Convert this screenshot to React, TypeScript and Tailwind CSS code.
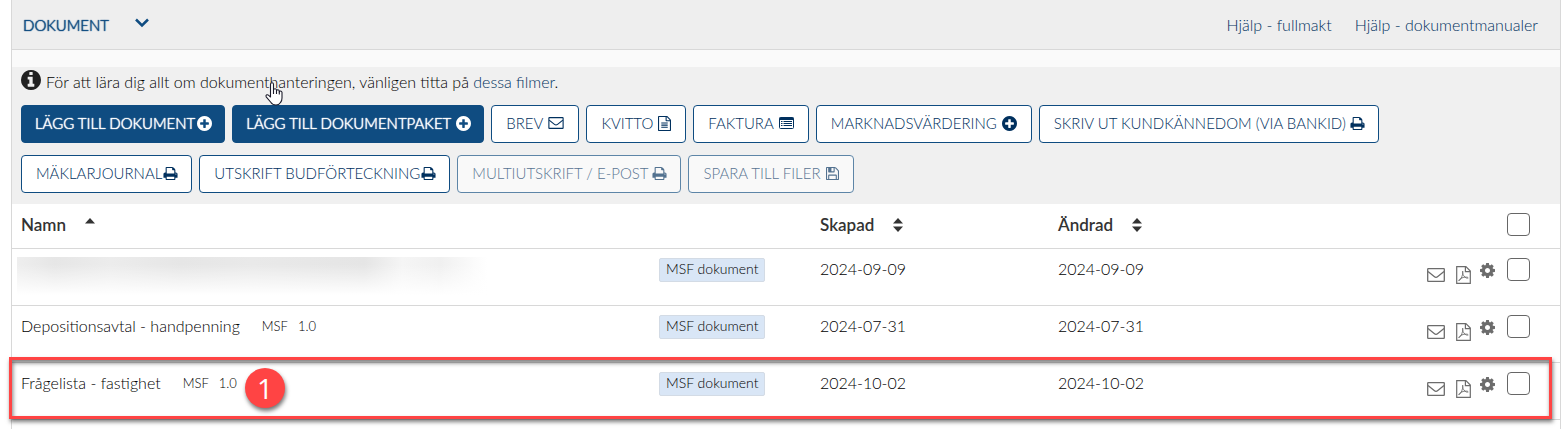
import React from 'react'
import clsx from 'clsx'

type IconProps = { className?: string }

const ICON_PATHS = {
  plus: 'M1344 960v-128q0-26-19-45t-45-19h-256v-256q0-26-19-45t-45-19h-128q-26 0-45 19t-19 45v256h-256q-26 0-45 19t-19 45v128q0 26 19 45t45 19h256v256q0 26 19 45t45 19h128q26 0 45-19t19-45v-256h256q26 0 45-19t19-45zm320-64q0 209-103 385.5t-279.5 279.5-385.5 103-385.5-103-279.5-279.5-103-385.5 103-385.5 279.5-279.5 385.5-103 385.5 103 279.5 279.5 103 385.5z',
  info: 'M1152 1376v-160q0-14-9-23t-23-9h-96v-512q0-14-9-23t-23-9h-320q-14 0-23 9t-9 23v160q0 14 9 23t23 9h96v320h-96q-14 0-23 9t-9 23v160q0 14 9 23t23 9h448q14 0 23-9t9-23zm-128-896v-160q0-14-9-23t-23-9h-192q-14 0-23 9t-9 23v160q0 14 9 23t23 9h192q14 0 23-9t9-23zm640 416q0 209-103 385.5t-279.5 279.5-385.5 103-385.5-103-279.5-279.5-103-385.5 103-385.5 279.5-279.5 385.5-103 385.5 103 279.5 279.5 103 385.5z',
  print: 'M448 1536h896v-256h-896v256zm0-640h896v-384h-160q-40 0-68-28t-28-68v-160h-640v640zm1152 64q0-26-19-45t-45-19-45 19-19 45 19 45 45 19 45-19 19-45zm128 0v416q0 13-9.5 22.5t-22.5 9.5h-224v160q0 40-28 68t-68 28h-960q-40 0-68-28t-28-68v-160h-224q-13 0-22.5-9.5t-9.5-22.5v-416q0-79 56.5-135.5t135.5-56.5h64v-544q0-40 28-68t68-28h672q40 0 88 20t76 48l152 152q28 28 48 76t20 88v256h64q79 0 135.5 56.5t56.5 135.5z',
  save: 'M512 1536h768v-384h-768v384zm896 0h128v-896q0-14-10-38.5t-20-34.5l-281-281q-10-10-34-20t-39-10v416q0 40-28 68t-68 28h-576q-40 0-68-28t-28-68v-416h-128v1280h128v-416q0-40 28-68t68-28h832q40 0 68 28t28 68v416zm-384-928v-320q0-13-9.5-22.5t-22.5-9.5h-192q-13 0-22.5 9.5t-9.5 22.5v320q0 13 9.5 22.5t22.5 9.5h192q13 0 22.5-9.5t9.5-22.5zm640 32v928q0 40-28 68t-68 28h-1344q-40 0-68-28t-28-68v-1344q0-40 28-68t68-28h928q40 0 88 20t76 48l280 280q28 28 48 76t20 88z',
  file: 'M1596 380q28 28 48 76t20 88v1152q0 40-28 68t-68 28h-1344q-40 0-68-28t-28-68v-1600q0-40 28-68t68-28h896q40 0 88 20t76 48zm-444-244v376h376q-10-29-22-41l-313-313q-12-12-41-22zm384 1528v-1024h-416q-40 0-68-28t-28-68v-416h-768v1536h1280zm-1024-864q0-14 9-23t23-9h704q14 0 23 9t9 23v64q0 14-9 23t-23 9h-704q-14 0-23-9t-9-23v-64zm736 224q14 0 23 9t9 23v64q0 14-9 23t-23 9h-704q-14 0-23-9t-9-23v-64q0-14 9-23t23-9h704zm0 256q14 0 23 9t9 23v64q0 14-9 23t-23 9h-704q-14 0-23-9t-9-23v-64q0-14 9-23t23-9h704z',
  cog: 'M1152 896q0-106-75-181t-181-75-181 75-75 181 75 181 181 75 181-75 75-181zm512-109v222q0 12-8 23t-20 13l-185 28q-19 54-39 91 35 50 107 138 10 12 10 25t-9 23q-27 37-99 108t-94 71q-12 0-26-9l-138-108q-44 23-91 38-16 136-29 186-7 28-36 28h-222q-14 0-24.5-8.5t-11.5-21.5l-28-184q-49-16-90-37l-141 107q-10 9-25 9-14 0-25-11-126-114-165-168-7-10-7-23 0-12 8-23 15-21 51-66.5t54-70.5q-27-50-41-99l-183-27q-13-2-21-12.5t-8-23.5v-222q0-12 8-23t19-13l186-28q14-46 39-92-40-57-107-138-10-12-10-24 0-10 9-23 26-36 98.5-107.5t94.5-71.5q13 0 26 10l138 107q44-23 91-38 16-136 29-186 7-28 36-28h222q14 0 24.5 8.5t11.5 21.5l28 184q49 16 90 37l142-107q9-9 24-9 13 0 25 10 129 119 165 170 7 8 7 22 0 12-8 23-15 21-51 66.5t-54 70.5q26 50 41 98l183 28q13 2 21 12.5t8 23.5z',
}

function SolidIcon({ name, className }: { name: keyof typeof ICON_PATHS; className?: string }) {
  return (
    <svg viewBox="128 128 1536 1536" className={clsx('shrink-0 overflow-visible', className)} fill="currentColor" aria-hidden="true">
      <path d={ICON_PATHS[name]} />
    </svg>
  )
}

const PlusIcon = () => <SolidIcon name="plus" className="size-[15px]" />
const PrintIcon = () => <SolidIcon name="print" className="size-[13px]" />
const SaveIcon = () => <SolidIcon name="save" className="size-[13px]" />
const FileIcon = () => <SolidIcon name="file" className="size-[13px]" />

function EnvelopeIcon({ className }: IconProps) {
  return (
    <svg viewBox="0 0 18 14" className={clsx('shrink-0', className)} fill="none" stroke="currentColor" strokeWidth="1.3" aria-hidden="true">
      <rect x="0.7" y="0.7" width="16.6" height="12.6" rx="0.6" />
      <path d="M1 3.6 7.2 8.6Q9 10 10.8 8.6L17 3.6" />
    </svg>
  )
}

function PdfIcon({ className }: IconProps) {
  return (
    <svg viewBox="0 0 15 18" className={clsx('shrink-0', className)} fill="none" stroke="currentColor" strokeWidth="1.2" aria-hidden="true">
      <path d="M0.7 0.7h9.2l4.4 4.4v12.2H0.7z" />
      <path d="M9.4 0.7v4.9h4.9" />
      <path strokeWidth="0.9" d="M6.7 5.2c-.7 1.700.5 4.300 2.200 5.900 1.100 1 2.600 1.300 3.300.8-.2-.9-2.800-1-5-.4-2.100.5-4.100 1.800-4.500 3.100.9.5 2.300-1.700 3.200-4.100.8-2.200 1.300-4.400.8-5.300z" />
    </svg>
  )
}

function ListIcon() {
  return (
    <svg viewBox="0 0 15 12" className="h-3 w-[15px] shrink-0" fill="none" stroke="currentColor" aria-hidden="true">
      <rect x="0.5" y="0.5" width="14" height="11" rx="1" />
      <path fill="currentColor" stroke="none" d="M0.500 0.500h14v2.500h-14z" />
      <path d="M2 4.500h1.500M4.500 4.500H13M2 6.500h1.500M4.500 6.500H13M2 8.500h1.500M4.500 8.500H13" />
    </svg>
  )
}

function SortIcon({ up, down }: { up?: boolean; down?: boolean }) {
  return (
    <svg viewBox="0 0 10 14" className="h-3.5 w-2.5" fill="currentColor" aria-hidden="true">
      {up && <path d="M5 0 10 5.500H0z" />}
      {down && <path d="M5 14 0 8.500h10z" />}
    </svg>
  )
}

function HandCursor() {
  return (
    <svg viewBox="0 0 18 24" className="pointer-events-none absolute top-[15px] left-[244px] h-6 w-[18px]" fill="#fff" stroke="#1c1c2b" strokeWidth="1.1" strokeLinejoin="round" aria-hidden="true">
      <path d="M5.500 15V2.300q0-1.500 1.500-1.500t1.500 1.500V8q.2-1.300 1.500-1.300T11.500 8v.8q.2-1 1.400-1t1.400 1.300v.8q.2-.9 1.300-.9t1.400 1.300V16q0 3-1.500 4.500-1.500 2.500-4.500 2.500-3.500 0-5-2.500L1.200 14.800q-.6-1.500.6-2 1-.3 1.900.6z" />
      <path fill="none" d="M8.500 8v4M11.500 8.500V12M14.300 9.500V12.500" />
    </svg>
  )
}

function ToolButton({ label, icon, primary, tight, disabled }: {
  label: string
  icon: React.ReactNode
  primary?: boolean
  tight?: boolean
  disabled?: boolean
}) {
  return (
    <button
      type="button"
      disabled={disabled}
      className={clsx(
        'flex h-[38px] items-center rounded border border-[#0f4c81] pb-0.5 text-[15px] whitespace-nowrap',
        primary
          ? 'bg-[#0f4c81] pr-3 pl-[13px] text-white [text-shadow:0_0_1px_currentColor,0_0_1px_currentColor]'
          : 'bg-white px-3.5 text-[#00305e]',
        tight ? 'gap-0.5' : 'gap-[5px]',
        disabled && 'opacity-65'
      )}
    >
      {label}
      {icon}
    </button>
  )
}

const documents = [
  { name: null, created: '2024-09-09', changed: '2024-09-09' },
  { name: 'Depositionsavtal - handpenning', created: '2024-07-31', changed: '2024-07-31' },
  { name: 'Frågelista - fastighet', created: '2024-10-02', changed: '2024-10-02', step: 1 },
]

const checkbox = 'block size-[23px] shrink-0 appearance-none rounded border border-[#666] bg-white checked:bg-[#0f4c81]'

export default function App() {
  return (
    <div className="overflow-hidden bg-white pr-[7px] pl-[11px] font-['Lato',sans-serif] text-[16px] leading-6 font-light text-black">
      <div className="border-x border-[#d8d8d8]">
        <header className="flex h-[50px] items-center justify-between border-b border-[#d8d8d8] bg-[#eee] pr-[22px] pl-[11px] text-[#00305e]">
          <button type="button" className="flex items-center gap-[26px] text-[15px] text-[#0f4c81] [text-shadow:0_0_1px_currentColor,0_0_1px_currentColor]">
            DOKUMENT
            <svg viewBox="0 0 14 10" className="mb-1 h-2.5 w-3.5" fill="none" stroke="currentColor" strokeWidth="2.5" aria-hidden="true">
              <path d="M1 1.500 7 7.500 13 1.500" />
            </svg>
          </button>
          <nav className="flex gap-[23px]">
            <a href="#fullmakt">Hjälp - fullmakt</a>
            <a href="#manualer">Hjälp - dokumentmanualer</a>
          </nav>
        </header>

        <section className="bg-[#f0f0f0] pb-[11px]">
          <div className="h-[17px] bg-[#fafafa]" />
          <div className="px-[9px]">
            <div className="relative flex h-[38px] gap-[5px] pt-[3px]">
              <SolidIcon name="info" className="size-5 text-[#222]" />
              <p>
                För att lära dig allt om dokumenthanteringen, vänligen titta på{' '}
                <a href="#filmer" className="text-[#00305e]">dessa filmer</a>.
              </p>
              <HandCursor />
            </div>
            <div className="flex flex-col gap-3">
              <div className="flex flex-wrap gap-[7px]">
                <ToolButton label="LÄGG TILL DOKUMENT" icon={<PlusIcon />} primary tight />
                <ToolButton label="LÄGG TILL DOKUMENTPAKET" icon={<PlusIcon />} primary />
                <ToolButton label="BREV" icon={<EnvelopeIcon className="h-3 w-4" />} />
                <ToolButton label="KVITTO" icon={<FileIcon />} />
                <ToolButton label="FAKTURA" icon={<ListIcon />} />
                <ToolButton label="MARKNADSVÄRDERING" icon={<PlusIcon />} />
                <ToolButton label="SKRIV UT KUNDKÄNNEDOM (VIA BANKID)" icon={<PrintIcon />} />
              </div>
              <div className="flex flex-wrap gap-[7px]">
                <ToolButton label="MÄKLARJOURNAL" icon={<PrintIcon />} tight />
                <ToolButton label="UTSKRIFT BUDFÖRTECKNING" icon={<PrintIcon />} tight />
                <ToolButton label="MULTIUTSKRIFT / E-POST" icon={<PrintIcon />} disabled />
                <ToolButton label="SPARA TILL FILER" icon={<SaveIcon />} disabled />
              </div>
            </div>
          </div>
        </section>

        <table className="w-full table-fixed border-separate border-spacing-0 text-left">
          <colgroup>
            <col />
            <col className="w-[161px]" />
            <col className="w-[238px]" />
            <col className="w-[238px]" />
            <col className="w-[274px]" />
          </colgroup>
          <thead className="text-[17px] text-[#333]">
            <tr className="h-[45px] *:border-b *:border-[#d8d8d8] *:pb-[3px] *:font-semibold">
              <th className="px-[9px]">
                <button type="button" className="flex items-center gap-[19px]">Namn <SortIcon up /></button>
              </th>
              <th aria-label="Typ" />
              <th className="px-2.5">
                <button type="button" className="flex items-center gap-[19px]">Skapad <SortIcon up down /></button>
              </th>
              <th className="px-2.5">
                <button type="button" className="flex items-center gap-[19px]">Ändrad <SortIcon up down /></button>
              </th>
              <th className="pr-[30px]">
                <input type="checkbox" aria-label="Markera alla" className={clsx(checkbox, 'ml-auto')} />
              </th>
            </tr>
          </thead>
          <tbody>
            {documents.map((doc) => (
              <tr key={doc.created} className="relative h-[57px] align-top *:border-b *:border-[#d8d8d8] *:pt-2">
                <td className="px-[9px]">
                  {doc.name ? (
                    <div className="flex items-center">
                      <span>{doc.name}</span>
                      <span className="ml-[22px] text-[13px]">MSF</span>
                      <span className="ml-2.5 text-[13px]">1.0</span>
                    </div>
                  ) : (
                    <div className="-ml-1 h-[38px] w-[470px] bg-[linear-gradient(to_right,#eee,#e6e6e6_8%,#ececec_20%,#e6e6e6_35%,#e9e9e9_50%,#e5e5e5_74%,#f5f5f5_82%,#f0f0f0_90%,#fff)]">
                      <div className="h-full bg-linear-to-b from-transparent from-20% to-white" />
                    </div>
                  )}
                  {doc.step && (
                    <>
                      <div className="pointer-events-none absolute -top-1.5 right-2 -left-[3px] h-[62px] border-3 border-[#ff4444] shadow-[1px_3px_4px_rgba(0,0,0,0.5),inset_1px_3px_4px_rgba(0,0,0,0.5)]" />
                      <span className="absolute top-[5px] left-[233px] flex size-10 items-center justify-center rounded-full bg-[#ff4444] font-['Open_Sans',sans-serif] text-[28px] font-normal text-white shadow-[1px_3px_4px_rgba(0,0,0,0.55)]">
                        {doc.step}
                      </span>
                    </>
                  )}
                </td>
                <td className="px-2.5">
                  <span className="mt-px flex h-6 w-fit items-center rounded-xs border border-[#d3dbe5] bg-[#d9e6f6] px-1.5 pb-0.5 text-[14px] whitespace-nowrap">
                    MSF dokument
                  </span>
                </td>
                <td className="px-2.5">{doc.created}</td>
                <td className="px-2.5">{doc.changed}</td>
                <td className="pr-[30px] text-[#6c6c6c]">
                  <div className="flex justify-end">
                    <button type="button" aria-label="E-post" className="mt-[11px] mr-[11px] self-start">
                      <EnvelopeIcon className="h-3.5 w-[18px]" />
                    </button>
                    <button type="button" aria-label="PDF" className="mt-[9px] mr-[9px] self-start">
                      <PdfIcon className="h-[18px] w-[15px]" />
                    </button>
                    <button type="button" aria-label="Inställningar" className="mt-1.5 mr-3 self-start">
                      <SolidIcon name="cog" className="size-[15px]" />
                    </button>
                    <input type="checkbox" aria-label={`Markera ${doc.name ?? 'dokument'}`} className={clsx(checkbox, 'mt-px')} />
                  </div>
                </td>
              </tr>
            ))}
          </tbody>
        </table>
        <div className="h-2.5" />
      </div>
    </div>
  )
}
